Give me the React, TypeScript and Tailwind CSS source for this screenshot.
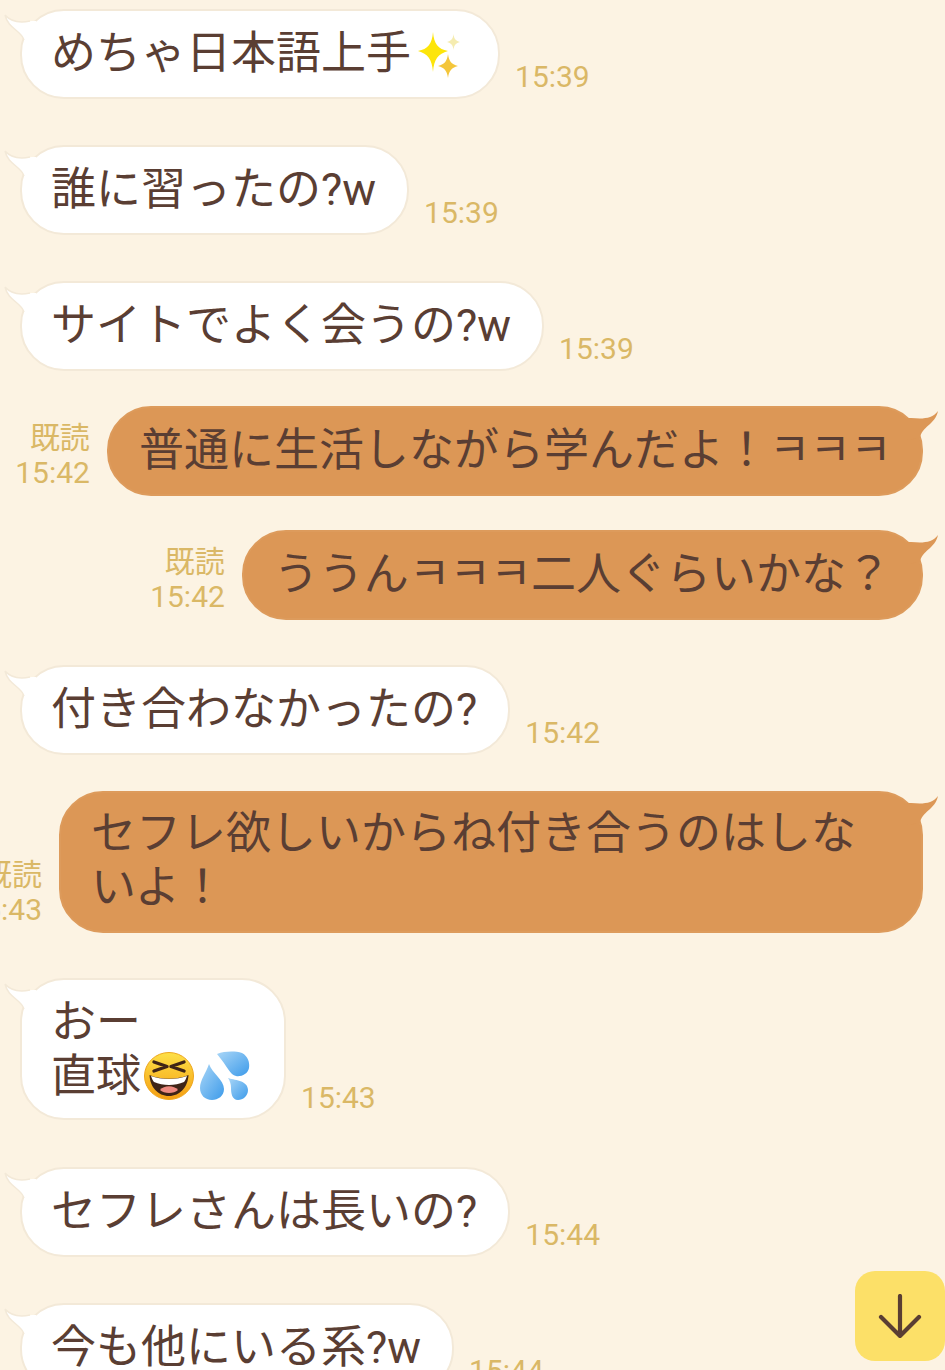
import type { ReactNode } from 'react';

function Sparkles() {
  return (
    <svg viewBox="0 0 52 52" className="inline-block w-[52px] h-[52px] -my-[10px] ml-[3px] mr-[1px] align-[-2px]">
      <path d="M19 3 C20 15 24 20 34 22 C24 25 20 30 19 43 C18 30 14 25 4 22 C14 20 18 15 19 3Z" fill="#fde50a" />
      <path d="M34 25 C35 32 37 35 44 37 C37 39 35 42 34 49 C33 42 31 39 24 37 C31 35 33 32 34 25Z" fill="#f4c63b" />
      <path d="M39.5 5 C40 10 42 12 46 13 C42 14 40 16 39.5 21 C39 16 37 14 33 13 C37 12 39 10 39.5 5Z" fill="#f5ecb0" />
    </svg>
  );
}

function LaughEmoji() {
  return (
    <svg viewBox="0 0 50 48" className="inline-block w-[50px] h-[48px] -my-[10px] ml-[3px] align-[2px]">
      <defs>
        <linearGradient id="face" x1="0" y1="0" x2="0" y2="1">
          <stop offset="0" stopColor="#fde047" />
          <stop offset="1" stopColor="#f59e12" />
        </linearGradient>
      </defs>
      <ellipse cx="25" cy="24" rx="24.5" ry="23.5" fill="url(#face)" stroke="#eea61c" strokeWidth="1" />
      <path d="M5.5 23 C17 28 33 28 44.5 23 C44 35 36 44 25 44 C14 44 6 35 5.5 23Z" fill="#3f2417" />
      <path d="M7 24 C17 28 33 28 43 24 C42 27 41 29 40 30 C31 34 19 34 10 30 C9 29 8 27 7 24Z" fill="#fff" />
      <path d="M16 38 C20 33 30 33 34 38 C30 42 20 42 16 38Z" fill="#ee8a80" />
      <path d="M10 10 L23 14.5 L10 19 M40 10 L27 14.5 L40 19" fill="none" stroke="#3f2417" strokeWidth="3.4" strokeLinecap="round" strokeLinejoin="round" />
    </svg>
  );
}

function SweatEmoji() {
  return (
    <svg viewBox="0 0 50 50" className="inline-block w-[50px] h-[50px] -my-[10px] ml-[6px] mr-[3px] align-[1px]">
      <defs>
        <linearGradient id="drop" x1="0" y1="0" x2="1" y2="1">
          <stop offset="0" stopColor="#a9d6f7" />
          <stop offset="1" stopColor="#3d9bea" />
        </linearGradient>
      </defs>
      <path d="M17 3 C25 0 35 0 42 2 C48 5 50 12 49 17 C48 23 41 26 36 25 C30 24 28 16 17 3Z" fill="url(#drop)" />
      <path d="M9 13 C12 22 24 29 24 38 C24 45 18 49 12 49 C5 49 0 44 0 37 C0 29 6 22 9 13Z" fill="url(#drop)" />
      <path d="M28 27 C33 29 48 29 48 39 C48 45 43 49 38 49 C32 49 31 42 31 37 C31 33 30 30 28 27Z" fill="url(#drop)" />
    </svg>
  );
}

function Bubble({ mine, box, className, children }: { mine?: boolean; box?: string; className?: string; children: ReactNode }) {
  return (
    <div
      className={`relative shrink-0 rounded-[44px] border-2 text-[45px] whitespace-pre-wrap ${box ?? 'py-[17px] leading-[52px]'} ${
        mine ? 'px-[30px] bg-[#dc9756] border-[#dd9b5c]' : 'pl-[29px] pr-[31px] bg-white border-[#f3e9d8]'
      } ${className ?? ''}`}
    >
      {mine ? (
        <svg viewBox="0 0 32 34" className="absolute right-[-18px] top-[2px] w-[32px] h-[34px]">
          <path d="M31 1 C25 9 16 9 4 8 L0 8 L0 30 L13 28 C15 16 28 15 31 1Z" fill="#dc9756" />
        </svg>
      ) : (
        <svg viewBox="0 0 32 34" className="absolute left-[-18px] top-[3px] w-[32px] h-[34px]">
          <path d="M1 1 C7 8 16 9 28 7 L32 7 L32 30 L20 26 C17 16 4 15 1 1Z" fill="#fff" />
          <path d="M1 1 C7 8 16 9 26 7 M20 26 C17 16 4 15 1 1" fill="none" stroke="#f3e9d8" strokeWidth="1.5" />
        </svg>
      )}
      {children}
    </div>
  );
}

function Theirs({ time, gap, box, children }: { time: string; gap: string; box?: string; children: ReactNode }) {
  return (
    <div className={`flex items-end pl-[20px] ${gap}`}>
      <Bubble box={box}>{children}</Bubble>
      <span className="ml-[15px] shrink-0 pb-[7px] text-[30px] leading-[30px] text-[#dab866]">{time}</span>
    </div>
  );
}

function Mine({ time, gap, box, className, children }: { time: string; gap: string; box?: string; className?: string; children: ReactNode }) {
  return (
    <div className={`flex items-end justify-end pr-[22px] ${gap}`}>
      <div className="mr-[17px] shrink-0 pb-[6px] text-right text-[30px] leading-[35px] text-[#dab866]">
        <div>既読</div>
        <div>{time}</div>
      </div>
      <Bubble mine box={box} className={className}>{children}</Bubble>
    </div>
  );
}

export default function App() {
  return (
    <div className="relative h-[1370px] overflow-hidden bg-[#fcf3e3] pt-[9px] text-[#5a3e33] font-['Roboto','Noto_Sans_CJK_JP',sans-serif]">
      <Theirs time="15:39" gap="mt-0">
        めちゃ日本語上手<Sparkles />
      </Theirs>
      <Theirs time="15:39" gap="mt-[46px]">誰に習ったの?w</Theirs>
      <Theirs time="15:39" gap="mt-[46px]">サイトでよく会うの?w</Theirs>
      <Mine time="15:42" gap="mt-[35px]">
        普通に生活しながら学んだよ！<span className="tracking-[-0.7px]">ㅋㅋㅋ</span>
      </Mine>
      <Mine time="15:42" gap="mt-[34px]">
        ううん<span className="tracking-[-0.7px]">ㅋㅋㅋ</span>二人ぐらいかな？
      </Mine>
      <Theirs time="15:42" gap="mt-[45px]">付き合わなかったの?</Theirs>
      <Mine time="15:43" gap="mt-[36px]" box="pt-[14px] pb-[16px] leading-[54px]" className="w-[864px]">
        セフレ欲しいからね付き合うのはしないよ！
      </Mine>
      <Theirs time="15:43" gap="mt-[45px]" box="pt-[16px] pb-[14px] leading-[54px]">
        おー{'\n'}直球<LaughEmoji /><SweatEmoji />
      </Theirs>
      <Theirs time="15:44" gap="mt-[47px]">セフレさんは長いの?</Theirs>
      <Theirs time="15:44" gap="mt-[46px]">今も他にいる系?w</Theirs>

      <button className="absolute right-0 top-[1271px] flex h-[90px] w-[90px] items-center justify-center rounded-[20px] bg-[#fce068]">
        <svg viewBox="0 0 44 44" className="h-[44px] w-[44px]">
          <path d="M22 2 V42 M3 23 L22 42 L41 23" fill="none" stroke="#5a3e33" strokeWidth="4.2" strokeLinecap="round" strokeLinejoin="round" />
        </svg>
      </button>
    </div>
  );
}
